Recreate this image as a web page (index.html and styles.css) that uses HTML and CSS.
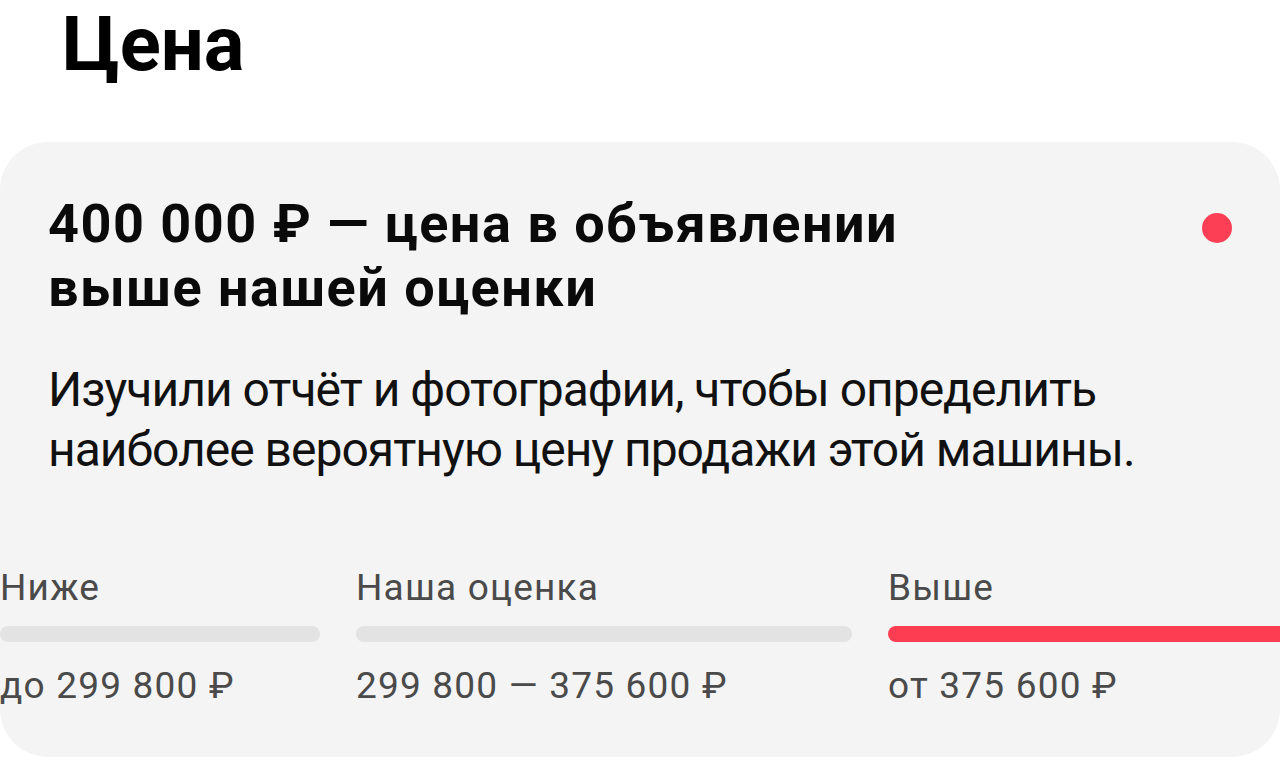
FILE: index.html
```html
<!DOCTYPE html>
<html lang="ru">
<head>
<meta charset="utf-8">
<title>Цена</title>
<link rel="stylesheet" href="styles.css">
</head>
<body>
<main class="page">
  <h1 class="page-title">Цена</h1>
  <section class="price-card">
    <div class="price-card__head">
      <h2 class="price-card__title">400 000 ₽ — цена в объявлении<br>выше нашей оценки</h2>
      <span class="price-card__dot" aria-hidden="true"></span>
    </div>
    <p class="price-card__text">Изучили отчёт и фотографии, чтобы определить<br>наиболее вероятную цену продажи этой машины.</p>
    <div class="scale">
      <div class="scale__col">
        <div class="scale__label">Ниже</div>
        <div class="scale__bar"></div>
        <div class="scale__value">до 299 800 ₽</div>
      </div>
      <div class="scale__col">
        <div class="scale__label">Наша оценка</div>
        <div class="scale__bar"></div>
        <div class="scale__value">299 800 — 375 600 ₽</div>
      </div>
      <div class="scale__col">
        <div class="scale__label">Выше</div>
        <div class="scale__bar scale__bar--active"></div>
        <div class="scale__value">от 375 600 ₽</div>
      </div>
    </div>
  </section>
</main>
</body>
</html>
```

FILE: styles.css
```css
* {
  box-sizing: border-box;
}

html, body {
  margin: 0;
  padding: 0;
  background: #ffffff;
}

body {
  font-family: Roboto, "Liberation Sans", Arial, sans-serif;
  color: #000000;
}

.page {
  width: 1280px;
  height: 782px;
  overflow: hidden;
}

.page-title {
  margin: 0;
  padding: 4px 0 0 62px;
  font-size: 76px;
  line-height: 80px;
  font-weight: 700;
  letter-spacing: 0;
}

.price-card {
  margin-top: 58px;
  height: 615px;
  background: #f4f4f4;
  border-radius: 48px;
  padding: 50px 0 0 48px;
  overflow: hidden;
}

.price-card__head {
  display: flex;
  justify-content: space-between;
  align-items: flex-start;
  padding-right: 48px;
}

.price-card__title {
  margin: 0;
  font-size: 54px;
  line-height: 64px;
  font-weight: 700;
  letter-spacing: 1.5px;
  color: #0a0a0a;
}

.price-card__dot {
  width: 30px;
  height: 30px;
  border-radius: 50%;
  background: #fc3f54;
  margin-top: 21px;
  flex: none;
}

.price-card__text {
  margin: 40px 0 0;
  font-size: 48px;
  line-height: 60px;
  font-weight: 400;
  letter-spacing: -1px;
  color: #111111;
}

.scale {
  display: grid;
  grid-template-columns: 320px 496px 1fr;
  column-gap: 36px;
  margin: 88px -40px 0 -48px;
}

.scale__label,
.scale__value {
  font-size: 37px;
  line-height: 40px;
  letter-spacing: 1.2px;
  color: #4a4a4a;
  white-space: nowrap;
}

.scale__bar {
  height: 16px;
  border-radius: 8px;
  background: #e3e3e3;
  margin: 18px 0 24px;
}

.scale__bar--active {
  background: #fd3d52;
}
```
